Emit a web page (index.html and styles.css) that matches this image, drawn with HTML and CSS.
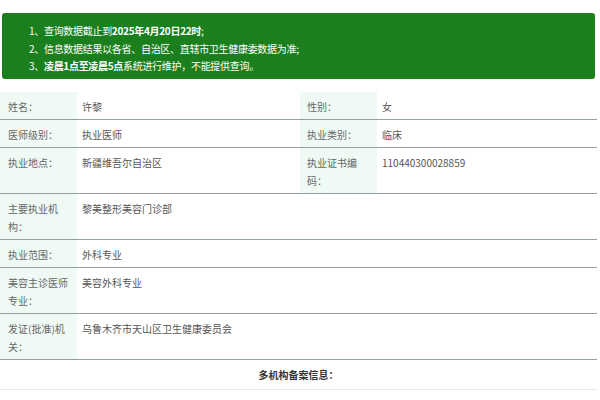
FILE: index.html
```html
<!DOCTYPE html>
<html lang="zh-CN">
<head>
<meta charset="utf-8">
<link rel="stylesheet" href="styles.css">
</head>
<body>
<div class="notice">
  <p>1、查询数据截止到<b>2025年4月20日22时</b>;</p>
  <p>2、信息数据结果以各省、自治区、直辖市卫生健康委数据为准;</p>
  <p>3、<b>凌晨1点至凌晨5点</b>系统进行维护，不能提供查询。</p>
</div>
<table class="info">
  <colgroup>
    <col class="c-label"><col class="c-value"><col class="c-label"><col class="c-value2">
  </colgroup>
  <tr>
    <td class="label">姓名：</td><td class="value">许黎</td>
    <td class="label label-r">性别：</td><td class="value">女</td>
  </tr>
  <tr>
    <td class="label">医师级别：</td><td class="value">执业医师</td>
    <td class="label label-r">执业类别：</td><td class="value">临床</td>
  </tr>
  <tr>
    <td class="label">执业地点：</td><td class="value">新疆维吾尔自治区</td>
    <td class="label label-r">执业证书编码：</td><td class="value">110440300028859</td>
  </tr>
  <tr>
    <td class="label">主要执业机构：</td><td class="value" colspan="3">黎美整形美容门诊部</td>
  </tr>
  <tr>
    <td class="label">执业范围：</td><td class="value" colspan="3">外科专业</td>
  </tr>
  <tr>
    <td class="label">美容主诊医师专业：</td><td class="value" colspan="3">美容外科专业</td>
  </tr>
  <tr>
    <td class="label">发证(批准)机关：</td><td class="value" colspan="3">乌鲁木齐市天山区卫生健康委员会</td>
  </tr>
  <tr class="sub">
    <td colspan="4">多机构备案信息：</td>
  </tr>
</table>
</body>
</html>
```
FILE: styles.css
```css
html, body {
  margin: 0;
  padding: 0;
  background: #ffffff;
}
body {
  font-family: "Noto Sans CJK SC", "Noto Sans", sans-serif;
  font-size: 10px;
  color: #555;
}
.notice {
  margin: 13px 5px 0 2px;
  height: 66px;
  box-sizing: border-box;
  padding: 9px 0 0 27px;
  background: #1b7f1e;
  border-radius: 3px;
  color: #fff;
  line-height: 17.5px;
  letter-spacing: -0.3px;
}
.notice p {
  margin: 0;
}
.notice b {
  font-weight: 700;
}
.info {
  margin-top: 13px;
  width: 597px;
  table-layout: fixed;
  border-collapse: collapse;
  line-height: 18px;
}
.c-label { width: 77px; }
.c-value { width: 223px; }
.c-value2 { width: 220px; }
.info td {
  padding: 6px 5px 3px 5px;
  vertical-align: top;
  border-bottom: 1px solid #94a29f;
}
.info td.label {
  background: #effaf5;
  padding-left: 8px;
  padding-right: 3px;
  color: #666;
}
.info td.label-r {
  padding-left: 7px;
}
.info td.value {
  color: #555;
}
.info tr.sub td {
  text-align: center;
  font-weight: 700;
  color: #333;
  padding: 6px 0 5px;
  border-bottom: 1px solid #e6e6e6;
}
```
